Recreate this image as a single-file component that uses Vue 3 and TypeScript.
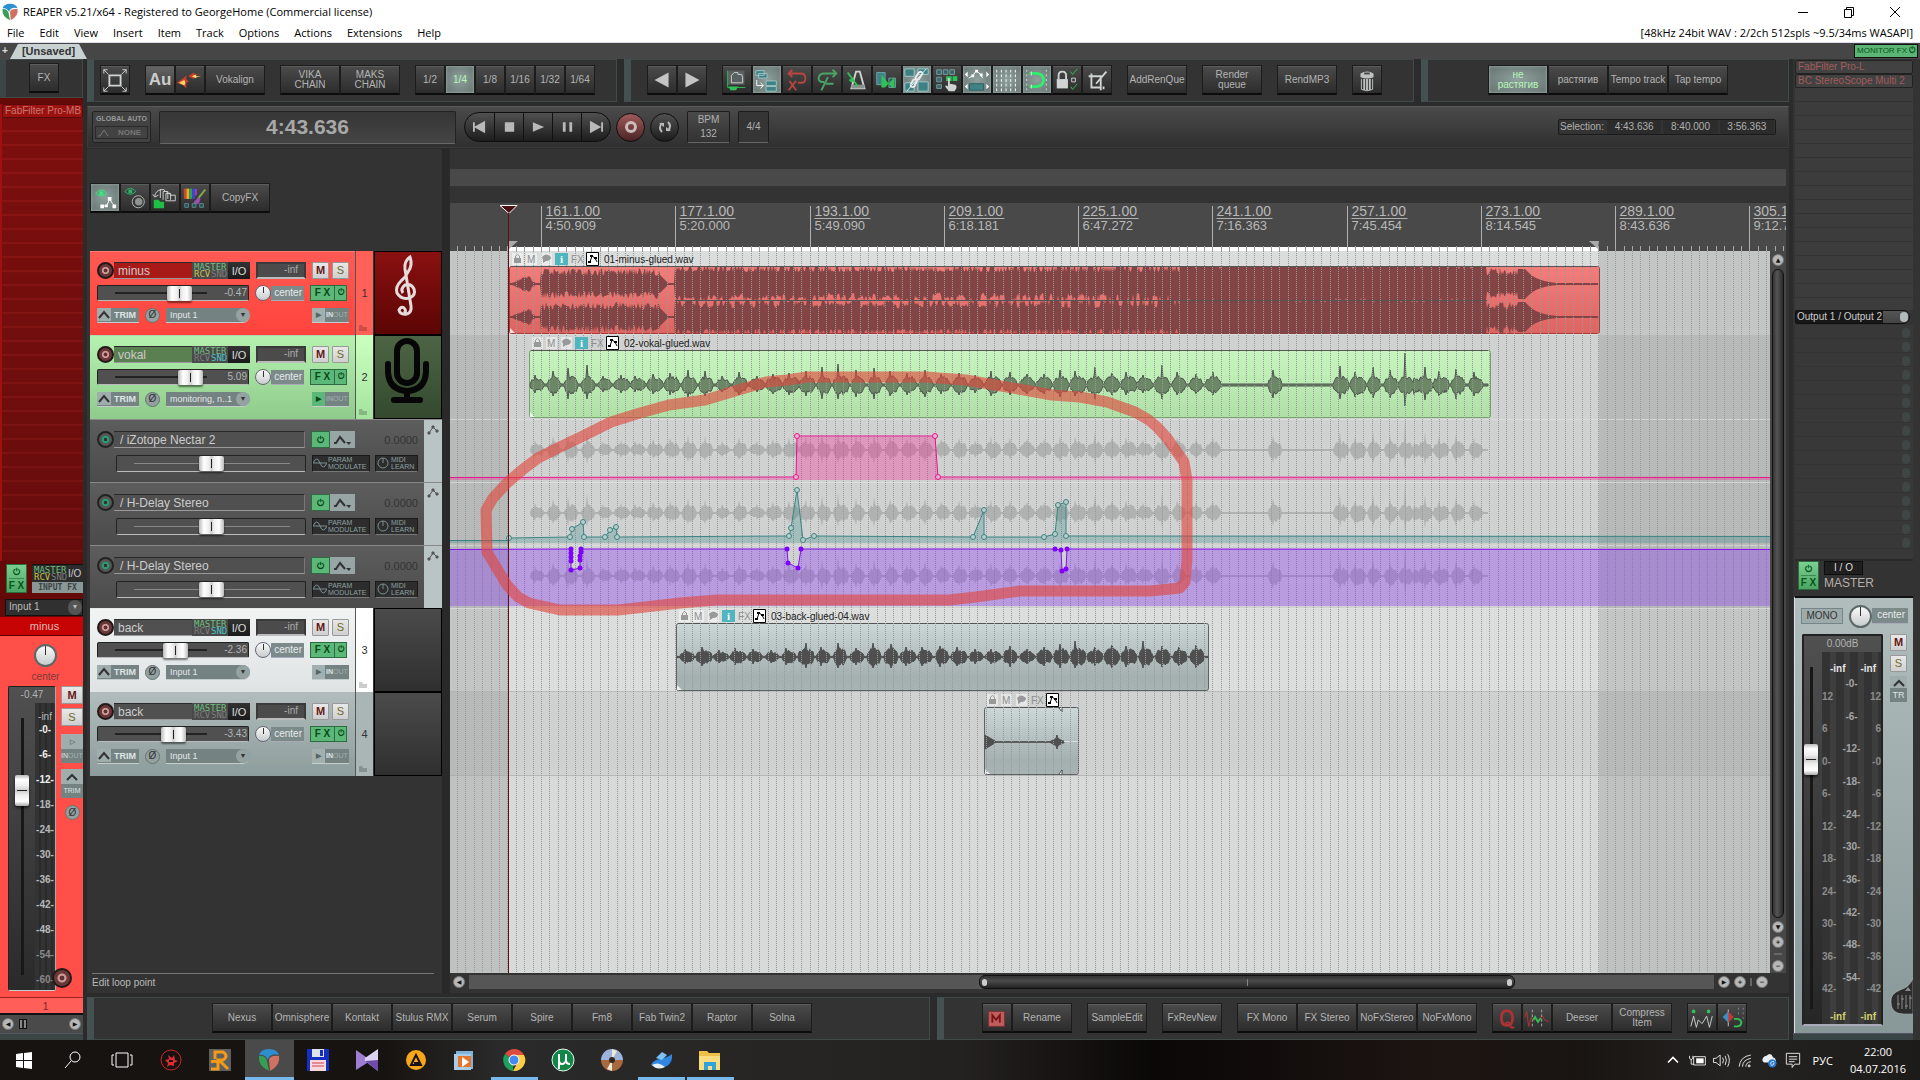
<script setup lang="ts">
interface Shape { d: string; f?: string; s?: string; w?: number }
interface ToolButton { label?: string; icon?: string; on?: boolean; wide?: boolean; title?: string }
interface Track {
  name: string; num: number; theme: string; gain: string; pos: number; input: string
  rcv?: boolean; snd?: boolean; monitor?: boolean; art?: string
}

const G = '#2fc257'
const W = '#d0d4d3'
const T = '#3f8286'

const icons: Record<string, Shape[]> = {
  expand: [
    { d: 'M9 10h12v11H9z', s: W, w: 2 },
    { d: 'M8 9L3 4M22 9l5-5M8 22l-5 5M22 22l5 5M3 8V4h4M27 8V4h-4M3 23v4h4M27 23v4h-4', s: W, w: 1 },
  ],
  flame: [
    { d: 'M13 11l6-4 1 2h8l-8 1-1 4z', f: '#c9402c' }, { d: 'M17 11l4-2 1 2 5 0-5 1-1 1z', f: '#ffd66a' },
    { d: 'M1 18l8-6 2-2v4l3 3-3 1v6l-3-3z', f: '#c9402c' }, { d: 'M3 18l6-3 1 3-1 3z', f: '#ffd66a' },
  ],
  prev: [{ d: 'M22 7v16L7 15z', f: '#c4c4c4' }],
  next: [{ d: 'M8 7v16l15-8z', f: '#c4c4c4' }],
  project: [
    { d: 'M5 5h18v15H5z', f: '#5a5f5f' }, { d: 'M5 5v18h19', s: G, w: 1 },
    { d: 'M9 18V10l3-3h4v2h4l1 3v6z', s: W, w: 1 }, { d: 'M6 22h10l-2 4H8z', f: G },
  ],
  ripple: [
    { d: 'M3 5h9v5H3zM6 8h9v5H6zM14 16h11v5H14zM14 22h11v5H14z', f: T, s: '#9fc5c5', w: 1 },
    { d: 'M4 15v6h7M8 18l3 3-3 3', s: '#fff', w: 1 },
  ],
  noUndo: [
    { d: 'M7 8h12q5 0 5 5t-5 5h-3M10 4L6 8l4 4', s: '#b8463f', w: 2 },
    { d: 'M7 16l7 10M14 16L6 26', s: '#b8463f', w: 2 },
  ],
  itemEdit: [{ d: 'M24 8H11q-5 1-5 6 1 4 6 3M21 4l4 4-4 4M16 12l-7 14M14 19h8', s: '#4aa564', w: 2 }],
  metronome: [
    { d: 'M14 6h4l5 18H9z', s: W, w: 2 }, { d: 'M9 20h14v4H9z', f: '#8b9090' }, { d: 'M5 7l11 15', s: G, w: 2 },
    { d: 'M6 15l6-3-3 6z', f: G },
  ],
  crossfade: [
    { d: 'M4 7h9v13H4z', f: T, s: '#6fa6a6', w: 1 }, { d: 'M17 13h7v10h-7z', f: '#345c5c', s: '#6fa6a6', w: 1 },
    { d: 'M9 9l11 14H9zM13 23h10V12z', f: G },
  ],
  group: [
    { d: 'M2 3h10v8H2zM16 3h11v6H16zM2 18h10v9H2zM16 17h11v10H16z', f: '#3d8086', s: '#a6caca', w: 1 },
    { d: 'M4 27L25 3', s: '#f2f5f5', w: 1 },
    { d: 'M8 20l3-5q3-2 4 1l-3 6q-3 2-4-2M13 13l4-6q3-2 4 1l-4 6q-2 2-4-1', s: '#e8eded', w: 2 },
  ],
  hand: [
    { d: 'M4 4h5v5H4zM11 4h5v5h-5zM18 4h5v5h-5zM4 12h5v5H4zM4 20h5v4H4z', f: '#3f6468', s: '#76a0a2', w: 1 },
    { d: 'M14 11h6v5h-6zM21 11h5v5h-5z', f: G },
    { d: 'M16 13q2-1 2 1v5l6 1q2 1 1 4l-2 3h-6l-4-5q1-2 3 0z', f: W },
  ],
  envMove: [
    { d: 'M6 13l5-3 3-5 5 4 2 4', s: '#fff', w: 1 }, { d: 'M9 9h3v3H9zM13 4h3v3h-3zM18 8h3v3h-3z', f: '#fff' },
    { d: 'M2 9l3-3v6zM28 9l-3-3v6zM2 22l3-3v6zM28 22l-3-3v6z', f: '#fff' }, { d: 'M7 19h15v7H7z', f: T, s: '#2b6165', w: 1 },
  ],
  grid: [
    { d: 'M4 4v3m0 2v3m0 2v3m0 2v3m0 2v3M9 4v3m0 2v3m0 2v3m0 2v3m0 2v3M14 4v3m0 2v3m0 2v3m0 2v3m0 2v3M19 4v3m0 2v3m0 2v3m0 2v3m0 2v3M24 4v3m0 2v3m0 2v3m0 2v3m0 2v3', s: '#fff', w: 1 },
  ],
  magnet: [
    { d: 'M4 4v2m0 3v2m0 3v2m0 3v2m0 3v2M25 4v2m0 3v2m0 3v2m0 3v2m0 3v2', s: '#d7e5e2', w: 1 },
    { d: 'M7 8h8q7 1 7 7t-7 7H7', s: '#2ff06b', w: 3 }, { d: 'M9 6v4M9 20v4', s: '#e9fff0', w: 1 },
  ],
  lock: [
    { d: 'M4 14h12v10H4z', f: W }, { d: 'M6 14v-4q0-4 4-4t4 4v4', s: W, w: 2 },
    { d: 'M19 6l2 3 5-6M19 22l2 3 5-6', s: G, w: 1 }, { d: 'M20 13h4v4h-4z', s: W, w: 1 },
  ],
  crop: [{ d: 'M9 8v15h9M6 11h13v15M14 19l11-13M22 22v3', s: W, w: 2 }],
  trash: [
    { d: 'M8 8q7-4 14 0v4q-7 3-14 0z', f: '#bfc2c2' }, { d: 'M9 14v11q6 3 12 0V14', s: '#bfc2c2', w: 1 },
    { d: 'M12 14v12M15 14v12M18 14v12', s: '#bfc2c2', w: 2 }, { d: 'M12 8h6', s: '#444', w: 2 },
  ],
  eyeEnv: [
    { d: 'M5 10q6-7 12 0-6 6-12 0z', s: '#2df07b', w: 1 }, { d: 'M9 8h4v4H9z', f: '#2df07b' },
    { d: 'M12 24l5-1 3-7 3 5 3 3', s: '#fff', w: 1 }, { d: 'M10 22h4v4h-4zM15 22h3v3h-3zM18 14h4v4h-4zM23 22h4v4h-4z', f: '#fff' },
  ],
  eyeKnob: [
    { d: 'M4 8q6-7 12 0-6 6-12 0z', s: '#2bb569', w: 1 }, { d: 'M8 6h4v4H8z', f: '#2bb569' },
    { d: 'M12 19a6 6 0 1 0 13 0a6 6 0 1 0-13 0', s: '#b9bcbc', w: 1 }, { d: 'M15 19a4 4 0 1 0 8 0a4 4 0 1 0-8 0', f: '#8f9393' },
  ],
  folders: [
    { d: 'M3 26V17h5l2 2h4v7z', f: '#1fbf45' }, { d: 'M4 13q1-6 7-7M2 11l2 3 4-2', s: W, w: 1 },
    { d: 'M10 15V6h4l1 2h3v8M13 17V8h4l1 2h3v7M16 18V10h4l1 2h5v6z', s: W, w: 1 },
  ],
  brush: [
    { d: 'M3 5h4v11H3z', f: '#cc4b2b' }, { d: 'M6 5h3v11H6z', f: '#d8b52d' }, { d: 'M9 5h3v11H9z', f: '#2ba15a' },
    { d: 'M12 5h3v11h-3z', f: '#4146c7' }, { d: 'M15 5h2v7h-2z', f: '#9b3fc7' },
    { d: 'M26 6l-8 10', s: '#7fae46', w: 2 }, { d: 'M19 14l-5 5-1 4 6-2 2-5z', f: '#9a4fb0' },
    { d: 'M4 21h4v4H4zM12 21h4v4h-4zM20 21h4v4h-4z', f: '#2b5055', s: '#5b8b90', w: 1 },
  ],
  mute: [{ d: 'M6 8h17v16H6z', f: '#c05d5d', s: '#7c3030', w: 1 }, { d: 'M10 20V12l4 5 4-5v8', s: '#7a1515', w: 2 }],
  q: [
    { d: 'M15 7q-6 0-6 8t6 8 6-8-6-8z', s: '#a33', w: 3 }, { d: 'M13 21q5-3 5 1t5 3', s: '#a33', w: 2 },
  ],
  trans: [
    { d: 'M10 6v3m0 2v3m0 2v3m0 2v3M20 6v3m0 2v3m0 2v3m0 2v3', s: '#aaa', w: 1 }, { d: 'M2 14l2-6 2 16 3-10 2 4', s: '#b33', w: 1 },
    { d: 'M11 17l2-3 3 5 3-4', s: G, w: 2 }, { d: 'M19 15l2-2 2 4 5 2', s: '#b33', w: 1 },
  ],
  peaks: [
    { d: 'M4 8a2 2 0 1 0 4 0a2 2 0 1 0-4 0M20 8a2 2 0 1 0 4 0a2 2 0 1 0-4 0', f: G },
    { d: 'M3 24l3-11 3 12 2-8 2 2 2 2 2-3 3-5 3 12 3-12', s: W, w: 1 },
  ],
  snapItem: [
    { d: 'M11 6v18', s: '#ccc', w: 1 }, { d: 'M11 8l-6 6 6 6z', f: '#3a8fc4' }, { d: 'M11 8l6 6-6 6z', f: '#c03a3a' },
    { d: 'M17 16h4q4 1 4 4t-4 4h-4', s: G, w: 2 }, { d: 'M22 4v2m0 3v2M27 4v2m0 3v2m0 3v2', s: '#888', w: 1 },
  ],
}

const bar1: ToolButton[][] = [
  [{ icon: 'expand', title: 'Zoom to project' }],
  [{ label: 'Au', title: 'Audition' }, { icon: 'flame', title: 'Spectral edit' }, { label: 'Vokalign', wide: true }],
  [{ label: 'VIKA\nCHAIN', wide: true }, { label: 'MAKS\nCHAIN', wide: true }],
  [{ label: '1/2' }, { label: '1/4', on: true }, { label: '1/8' }, { label: '1/16' }, { label: '1/32' }, { label: '1/64' }],
]
const bar2: ToolButton[][] = [
  [{ icon: 'prev', title: 'Previous' }, { icon: 'next', title: 'Next' }],
  [
    { icon: 'project', title: 'Project' }, { icon: 'ripple', on: true, title: 'Ripple' }, { icon: 'noUndo', title: 'Clear' },
    { icon: 'itemEdit', title: 'Edit' }, { icon: 'metronome', title: 'Metronome' }, { icon: 'crossfade', title: 'Crossfade' },
    { icon: 'group', on: true, title: 'Grouping' }, { icon: 'hand', title: 'Select group' }, { icon: 'envMove', on: true, title: 'Move envelopes' },
    { icon: 'grid', on: true, title: 'Grid' }, { icon: 'magnet', on: true, title: 'Snap' }, { icon: 'lock', title: 'Lock' }, { icon: 'crop', title: 'Crop' },
  ],
  [{ label: 'AddRenQue', wide: true }],
  [{ label: 'Render\nqueue', wide: true }],
  [{ label: 'RendMP3', wide: true }],
  [{ icon: 'trash', title: 'Clean' }],
]
const bar3: ToolButton[][] = [
  [{ label: 'не\nрастягив', on: true, wide: true }, { label: 'растягив', wide: true }, { label: 'Tempo track', wide: true }, { label: 'Tap tempo', wide: true }],
]
const tcpBar: ToolButton[][] = [
  [
    { icon: 'eyeEnv', on: true, title: 'Show envelopes' }, { icon: 'eyeKnob', title: 'Show controls' }, { icon: 'folders', title: 'Folders' },
    { icon: 'brush', title: 'Colours' }, { label: 'CopyFX', wide: true },
  ],
]
const bar4: ToolButton[][] = [
  ['Nexus', 'Omnisphere', 'Kontakt', 'Stulus RMX', 'Serum', 'Spire', 'Fm8', 'Fab Twin2', 'Raptor', 'Solna'].map((label) => ({ label, wide: true })),
]
const bar5: ToolButton[][] = [
  [{ icon: 'mute', title: 'Mute' }, { label: 'Rename', wide: true }],
  [{ label: 'SampleEdit', wide: true }],
  [{ label: 'FxRevNew', wide: true }],
  [{ label: 'FX Mono', wide: true }, { label: 'FX Stereo', wide: true }, { label: 'NoFxStereo', wide: true }, { label: 'NoFxMono', wide: true }],
  [{ icon: 'q', title: 'Quantize' }, { icon: 'trans', title: 'Transients' }, { label: 'Deeser', wide: true }, { label: 'Compress\nItem', wide: true }],
  [{ icon: 'peaks', title: 'Peaks' }, { icon: 'snapItem', title: 'Snap item' }],
]
const topBars = [
  { cls: 'b1', groups: bar1 }, { cls: 'b2', groups: bar2 }, { cls: 'b3', groups: bar3 },
]
const bottomBars = [{ cls: 'b4', groups: bar4 }, { cls: 'b5', groups: bar5 }]

const menus = ['File', 'Edit', 'View', 'Insert', 'Item', 'Track', 'Options', 'Actions', 'Extensions', 'Help']

const reaperLogo: Shape[] = [
  { d: 'M2 7Q4 1 12 1q8 0 10 6-5-2-9 1-2 2-2 4Q8 6 2 7z', f: '#2b8fd0' },
  { d: 'M2 8q6-1 8 5l2 10Q1 18 2 8z', f: '#35a055' },
  { d: 'M13 23l-1-11q1-5 10-4 2 9-9 15z', f: '#cf7263' },
]

const transport: Shape[][] = [
  [{ d: 'M9 10v10M20 10v10l-9-5z', f: '#b9b9b9', s: '#b9b9b9', w: 2 }],
  [{ d: 'M10 10h10v10H10z', f: '#b9b9b9' }],
  [{ d: 'M9 10l12 5-12 5z', f: '#b9b9b9' }],
  [{ d: 'M10 10h3v10h-3zM17 10h3v10h-3z', f: '#b9b9b9' }],
  [{ d: 'M21 10v10M9 10v10l9-5z', f: '#b9b9b9', s: '#b9b9b9', w: 2 }],
]
const transportNames = ['Go to start', 'Stop', 'Play', 'Pause', 'Go to end']

const tracksTop: Track[] = [
  { name: 'minus', num: 1, theme: 'red', gain: '-0.47', pos: 55, input: 'Input 1', rcv: true, art: 'clef' },
  { name: 'vokal', num: 2, theme: 'green', gain: '5.09', pos: 64, input: 'monitoring, n..1', snd: true, monitor: true, art: 'mic' },
]
const envs = ['/ iZotope Nectar 2', '/ H-Delay Stereo', '/ H-Delay Stereo']
const tracksBottom: Track[] = [
  { name: 'back', num: 3, theme: 'white', gain: '-2.36', pos: 52, input: 'Input 1', snd: true },
  { name: 'back', num: 4, theme: 'grey', gain: '-3.43', pos: 50, input: 'Input 1' },
]
const rows: { track?: Track; env?: string }[] = [
  ...tracksTop.map((track) => ({ track })), ...envs.map((env) => ({ env })), ...tracksBottom.map((track) => ({ track })),
]

/* timeline geometry */
const BAR = 134.27
const ruler = [
  ['161.1.00', '4:50.909'], ['177.1.00', '5:20.000'], ['193.1.00', '5:49.090'], ['209.1.00', '6:18.181'], ['225.1.00', '6:47.272'],
  ['241.1.00', '7:16.363'], ['257.1.00', '7:45.454'], ['273.1.00', '8:14.545'], ['289.1.00', '8:43.636'], ['305.1.00', '9:12.727'],
].map(([bar, time], i) => ({ bar, time, x: Math.round(541 + i * BAR) + 0.5 }))
const gridLines = Array.from({ length: 170 }, (_, i) => Math.round(541 + (i - 10) * (BAR / 16)) + 0.5)

const noise = (n: number): number => {
  const v = Math.sin(n * 127.1 + 11.7) * 43758.5453
  return v - Math.floor(v)
}
function outline(x0: number, x1: number, cy: number, amp: (x: number) => [number, number]): string {
  const up: string[] = []
  const down: string[] = []
  for (let x = x0; x <= x1; x++) {
    const [u, d] = amp(x)
    up.push(`${x} ${(cy - u).toFixed(1)}`)
    down.unshift(`${x} ${(cy + d).toFixed(1)}`)
  }
  return `M${up.join('L')}L${down.join('L')}z`
}
type Burst = [number, number, number]
function burstAmp(bursts: Burst[], half: number, floor: number) {
  return (x: number): [number, number] => {
    for (const [c, u, d] of bursts) {
      const k = Math.abs(x - c) / (half - 2 * noise(c))
      if (k < 1) {
        const shape = Math.pow(1 - k * k, 0.35)
        const spike = Math.round(x - c + 3 * noise(c + 9)) === 0
        const base = Math.min(u, 12) * 0.62
        return [
          Math.max(floor, spike ? u : base * shape * (0.75 + 0.5 * noise(x))),
          Math.max(floor, spike ? d : Math.min(d, 12) * 0.78 * shape * (0.65 + 0.4 * noise(x + 500))),
        ]
      }
    }
    return [floor, floor]
  }
}
const vocalUps = [10, 14, 17, 20, 9, 10, 9, 11, 12, 15, 14, 9, 13, 9, 11, 12, 14, 18, 21, 15, 17, 14, 12, 15, 11, 12, 10, 14, 13, 11, 11, 15, 14, 18, 12, 13, 10, 20, 13, 11, 13]
const vocal: Burst[] = [
  ...vocalUps.map((u, i): Burst => [Math.round(537 + i * 16.9), u, Math.min(14, Math.round(u * 0.8))]),
  [1275, 15, 13], [1341, 19, 14], [1358, 13, 12], [1374, 18, 13], [1391, 15, 13], [1406, 32, 21], [1412, 26, 16], [1425, 18, 15], [1441, 14, 11], [1458, 16, 14], [1476, 13, 11],
]
const vocalPath = outline(530, 1488, 385, burstAmp(vocal, 8, 1))
const backUps = [7, 9, 6, 8, 7, 6, 8, 13, 9, 13, 8, 13, 12, 9, 9, 10, 9, 7, 7, 10, 7, 9, 12, 15, 9, 11, 10, 15, 10, 9, 11]
const backPath = outline(677, 1208, 657, burstAmp(backUps.map((u, i): Burst => [687 + i * 17, u + 1, Math.min(11, u)]), 8, 0.6))
const smallPath = outline(985, 1064, 742, (x) => {
  const a = x < 996 ? 7 - (x - 985) * 0.6 : x === 1057 ? 7 : x > 1050 ? Math.max(1, 4 - Math.abs(x - 1057) * 0.5) : 0.2
  return [a, a]
})
function mixAmp(seed: number, flip: boolean) {
  return (x: number): [number, number] => {
    const n = noise(x + seed)
    let a = 16
    let b = 16
    if (x < 535) a = b = 1 + Math.max(0, Math.min(x - 512, 14) / 2) * (x > 531 ? 0.2 : 0.6 + n * 0.5)
    else if (x < 541) a = b = 1
    else if (x < 660) { a = 8 + n * 8; b = 7 + noise(x + seed + 90) * 8 }
    else if (x < 668) a = b = 9 - (x - 660)
    else if (x < 675) a = b = 1
    else if (x < 1180) {
      const density = x < 960 ? 0.5 : x < 1080 ? 0.62 : 0.75
      a = n > density ? 16 - n * 4 : 17
      const m = 0.6 * noise(Math.floor(x / 3) + seed + 33) + 0.4 * noise(x + seed + 5)
      b = m > density * 0.8 ? 20 - m * 12 : 17
      if (b > 16) b = 17
    } else if (x < 1487) {
      a = n > 0.96 ? 15 : 17
      b = noise(x + seed + 7) > 0.96 ? 14 : 17
    } else if (x < 1518) { a = 8 + n * 9; b = 7 + noise(x + seed) * 8 }
    else if (x < 1526) { a = 15; b = 15 }
    else if (x < 1558) a = b = Math.max(1, 14 * Math.exp(-(x - 1526) / 12))
    else a = b = 1
    return flip ? [b, a] : [a, b]
  }
}
const mixPath = outline(510, 1598, 284, mixAmp(0, false)) + outline(510, 1598, 317, mixAmp(40, true))

const lanes = [
  { y: 251, h: 84, sel: '#dbdddc', out: '#c4c6c5' }, { y: 335, h: 84, sel: '#d0d2d1', out: '#b8bab9' },
  { y: 419, h: 63, sel: '#d0d2d1', out: '#b8bab9' }, { y: 482, h: 63, sel: '#d0d2d1', out: '#b8bab9' },
  { y: 545, h: 63, sel: '#d0d2d1', out: '#b8bab9' }, { y: 608, h: 84, sel: '#dcdedd', out: '#c4c6c5' },
  { y: 692, h: 84, sel: '#d0d2d1', out: '#b8bab9' },
]
const clips = [
  { x: 509, y: 267, w: 1090, h: 67, fill: 'url(#gRed)', line: '#a83a3a', label: '01-minus-glued.wav', info: true },
  { x: 529, y: 351, w: 961, h: 67, fill: 'url(#gGreen)', line: '#76a36c', label: '02-vokal-glued.wav', info: true },
  { x: 676, y: 624, w: 532, h: 67, fill: 'url(#gGrey)', line: '#5b6363', label: '03-back-glued-04.wav', info: true },
  { x: 984, y: 708, w: 94, h: 67, fill: 'url(#gGrey)', line: '#5b6363', label: '', info: false },
]
type P = [number, number]
const pinkPts: P[] = [[796, 477], [797, 436], [935, 436], [938, 477]]
const tealPts: P[] = [
  [509, 538], [570, 537], [572, 529], [583, 522], [584, 537], [605, 537], [610, 530], [616, 527], [617, 537], [789, 536], [791, 528], [797, 490],
  [803, 540], [814, 536], [973, 537], [984, 510], [984, 537], [1044, 537], [1055, 534], [1058, 505], [1066, 502], [1066, 536],
]
const purplePts: P[] = [
  [571, 549], [571, 553], [571, 557], [571, 561], [571, 570], [580, 568], [580, 560], [580, 556], [581, 552], [581, 549],
  [787, 549], [788, 563], [798, 568], [801, 549], [1055, 549], [1061, 550], [1062, 571], [1066, 569], [1067, 549],
]
const line = (pts: P[]): string => pts.map((p) => p.join(' ')).join('L')

const dbLeft = ['-0-', '-6-', '-12-', '-18-', '-24-', '-30-', '-36-', '-42-', '-48-', '-54-', '-60-']
const dbMid = dbLeft.slice(0, 10)
const dbSide = ['12', '6', '0', '6', '12', '18', '24', '30', '36', '42']

const apps: { name: string; active?: boolean; open?: boolean; shapes: Shape[] }[] = [
  { name: 'Start', shapes: [{ d: 'M4 6l7-1v7H4zM12 5l8-1v8h-8zM4 13h7v7l-7-1zM12 13h8v8l-8-1z', f: '#fff' }] },
  { name: 'Search', shapes: [{ d: 'M9 9a5 5 0 1 0 10 0a5 5 0 1 0-10 0M10 13l-6 7', s: '#fff', w: 1 }] },
  { name: 'Task view', shapes: [{ d: 'M6 5h12v14H6zM4 7H2v10h2M20 7h2v10h-2', s: '#fff', w: 1 }] },
  { name: 'Mixer', shapes: [{ d: 'M2 12a10 10 0 1 0 20 0a10 10 0 1 0-20 0', s: '#c9252c', w: 1 }, { d: 'M6 12l4-1-1-4 4 3 2-3 1 5 3 1-4 2 0 3-4-1-3 2 1-4z', f: '#e02b31' }, { d: 'M10 12h4v2h-4z', f: '#111' }] },
  { name: 'Rapid', shapes: [{ d: 'M1 1h22v22H1z', f: '#5d5f60' }, { d: 'M7 11V4h8q6 4 0 8h-4l9 9M3 14q5-2 7 1v6H3', s: '#f49a16', w: 3 }] },
  { name: 'Reaper', active: true, shapes: reaperLogo },
  { name: 'Total Commander', shapes: [{ d: 'M1 1h22v22H1z', f: '#1530c0' }, { d: 'M6 1h12v8H6z', f: '#dfe3ea' }, { d: 'M14 2h3v6h-3z', f: '#1530c0' }, { d: 'M4 12h16v11H4z', f: '#f5d9dc' }, { d: 'M6 15h12M6 18h12', s: '#d43c4a', w: 1 }] },
  { name: 'Video editor', shapes: [{ d: 'M1 2l10 7 1 6-11 7z', f: '#9d7ed2' }, { d: 'M23 1v22L10 13V10z', f: '#ddd2f2' }, { d: 'M23 12v11L10 13z', f: '#6f4cab' }] },
  { name: 'AIMP', shapes: [{ d: 'M2 12a10 10 0 1 0 20 0a10 10 0 1 0-20 0', f: '#f9a61a' }, { d: 'M7 17l5-10 5 10zM10 15h5', s: '#141414', w: 2 }] },
  { name: 'Player', shapes: [{ d: 'M3 3h17v18H3z', f: '#7fb4d8' }, { d: 'M1 6h17v16H1z', f: '#a9cde4' }, { d: 'M5 8h13v11H5z', f: '#e8742b' }, { d: 'M9 9l7 5-7 5z', f: '#fff' }] },
  { name: 'Chrome', open: true, shapes: [{ d: 'M12 12L3 6a11 11 0 0 1 19 1H12z', f: '#dd4b3e' }, { d: 'M12 12l-1 11A11 11 0 0 1 3 6z', f: '#1fa15d' }, { d: 'M12 7h10a11 11 0 0 1-11 16l5-9z', f: '#fdce45' }, { d: 'M7 12a5 5 0 1 0 10 0a5 5 0 1 0-10 0', f: '#4688f1', s: '#fff', w: 1 }] },
  { name: 'uTorrent', shapes: [{ d: 'M1 12a11 11 0 1 0 22 0a11 11 0 1 0-22 0', f: '#118747', s: '#e8f5ec', w: 1 }, { d: 'M8 21V6M8 12q0 4 3 4t4-4V6M15 12q0 4 4 4', s: '#fff', w: 2 }] },
  { name: 'Disc burner', shapes: [{ d: 'M1 12a11 11 0 0 1 22 0z', f: '#9db3dc' }, { d: 'M1 12a11 11 0 0 0 22 0z', f: '#a8693f' }, { d: 'M12 1l5 2-5 9zM12 23l-5-2 5-9z', f: '#eee8d6' }, { d: 'M9 12a3 3 0 1 0 6 0a3 3 0 1 0-6 0', f: '#33271f' }] },
  { name: 'Thunderbird', open: true, shapes: [{ d: 'M2 17q2-5 9-6t12-5q1 8-5 12t-16-1z', f: '#2f86e0' }, { d: 'M7 10l6-6 5 3-5 5z', f: '#7bc0f7' }, { d: 'M3 17q6-4 13 2-8 4-13-2z', f: '#e8eef5' }] },
  { name: 'Explorer', open: true, shapes: [{ d: 'M1 3h8l2 2h11v17H1z', f: '#f0bf46' }, { d: 'M1 8h21v14H1z', f: '#fbdd80' }, { d: 'M6 14h12v8h-4v-4h-4v4H6z', f: '#2ea4dc' }] },
]
const tray: { name: string; shapes: Shape[] }[] = [
  { name: 'Show hidden icons', shapes: [{ d: 'M6 15l6-6 6 6', s: '#fff', w: 2 }] },
  { name: 'Battery', shapes: [{ d: 'M8 8h14v10H8z', s: '#fff', w: 1 }, { d: 'M11 10h9v6h-9z', f: '#fff' }, { d: 'M3 7v3q2 3 4 0V7M5 11v6h3', s: '#fff', w: 1 }] },
  { name: 'Volume', shapes: [{ d: 'M3 10h3l5-4v13l-5-4H3zM14 9q2 3 0 7M17 7q3 5 0 11M20 5q4 7 0 15', s: '#fff', w: 1 }] },
  { name: 'Network', shapes: [{ d: 'M5 20Q6 8 19 6M9 20q0-8 10-10M13 20q0-5 6-6M16 18h2v2h-2z', s: '#fff', w: 1 }] },
  { name: 'OneDrive', shapes: [{ d: 'M4 13q0-5 5-6 5-5 8 2 4 1 3 6H6z', f: '#e8eef2' }, { d: 'M11 16a5 5 0 1 0 10 0a5 5 0 1 0-10 0', f: '#2479cf' }, { d: 'M14 17q0-4 4-3M18 15q0 4-4 3', s: '#fff', w: 1 }] },
  { name: 'Notifications', shapes: [{ d: 'M4 4h16v13h-6l-3 4v-4H4zM7 8h10M7 11h10M7 14h7', s: '#fff', w: 1 }] },
]
</script>

<template>
  <div class="app">
    <header class="title">
      <svg width="18" height="20" viewBox="0 0 24 24"><path v-for="(p, i) in reaperLogo" :key="i" :d="p.d" :fill="p.f" /></svg>
      <h1>REAPER v5.21/x64 - Registered to GeorgeHome (Commercial license)</h1>
      <div class="win">
        <button aria-label="Minimize"><svg width="12" height="12"><path d="M1 6.500h10" stroke="#000" /></svg></button>
        <button aria-label="Restore"><svg width="12" height="12" fill="none" stroke="#000"><path d="M1.500 3.500h7v8h-7zM3.500 3V1.500h7v8H9" /></svg></button>
        <button aria-label="Close"><svg width="12" height="12" stroke="#000"><path d="M1 1l10 10M11 1L1 11" /></svg></button>
      </div>
    </header>
    <nav class="menu">
      <a v-for="m in menus" :key="m" href="#">{{ m }}</a>
      <span>[48kHz 24bit WAV : 2/2ch 512spls ~9.5/34ms WASAPI]</span>
    </nav>
    <div class="tabs">
      <button class="plus">+</button>
      <button class="tab"><span>[Unsaved]</span></button>
      <button class="monfx">MONITOR FX<b>⏻</b></button>
    </div>

    <div class="body">
      <!-- track mixer strip -->
      <aside class="left">
        <div class="fxbar"><button class="tb">FX</button></div>
        <div class="fxlist red"><button class="fxitem">FabFilter Pro-MB</button></div>
        <div class="lrow">
          <button class="fxpow"><b>⏻</b><span>F X</span></button>
          <div class="lio">
            <button class="route"><span class="msr"><i class="g">MASTER</i><i class="y">RCV</i><i>SND</i></span><em>I/O</em></button>
            <button class="infx">INPUT FX</button>
          </div>
        </div>
        <button class="linput">Input 1<i>▼</i></button>
        <div class="lname">minus</div>
        <div class="strip">
          <button class="knob big" aria-label="Pan"></button>
          <div class="cen">center</div>
          <div class="strip-in">
            <div class="lbox">
              <div class="gain">-0.47</div>
              <div class="lmeter">
                <input class="vf" type="range" min="0" max="100" value="72" aria-label="Volume" />
                <ul>
                  <li class="inf">-inf</li>
                  <li v-for="(d, i) in dbLeft" :key="d" :class="{ hot: i < 3, dim: i > 8, first: i === 0 }">{{ d }}</li>
                </ul>
              </div>
              <button class="rec lrec" aria-label="Record arm"></button>
            </div>
            <div class="lbtns">
              <button class="ms m">M</button>
              <button class="ms s">S</button>
              <button class="stack"><span>▷</span><em>IN<i>OUT</i></em></button>
              <button class="stack"><span><svg width="14" height="9"><path d="M2 8l5-5 5 5" fill="none" stroke="#333" stroke-width="2" /></svg></span><em>TRIM</em></button>
              <button class="phase">Ø</button>
            </div>
          </div>
        </div>
        <div class="lnum">1</div>
        <div class="lscroll"><button class="rb">◀</button><i></i><button class="rb">▶</button></div>
        <div class="lfoot"></div>
      </aside>

      <main class="center">
        <div class="bars">
          <section v-for="bar in topBars" :key="bar.cls" class="bar" :class="bar.cls">
            <div v-for="(g, gi) in bar.groups" :key="gi" class="grp">
              <button v-for="(b, bi) in g" :key="bi" class="tb" :class="{ wide: b.wide, on: b.on, au: b.label === 'Au' }" :title="b.title">
                <svg v-if="b.icon" width="28" height="28" viewBox="0 0 30 30"><path v-for="(p, pi) in icons[b.icon]" :key="pi" :d="p.d" :fill="p.f || 'none'" :stroke="p.s" :stroke-width="p.w" /></svg>
                <span v-else>{{ b.label }}</span>
              </button>
            </div>
          </section>
        </div>

        <section class="transport">
          <div class="gauto">
            <span>GLOBAL AUTO</span>
            <button><svg width="14" height="11"><path d="M2 9h2l4-6 4 6" fill="none" stroke="#777" /></svg>NONE</button>
          </div>
          <div class="clock">4:43.636</div>
          <div class="pill">
            <button v-for="(t, i) in transport" :key="i" :aria-label="transportNames[i]">
              <svg width="29" height="28" viewBox="0 0 30 30"><path v-for="(p, pi) in t" :key="pi" :d="p.d" :fill="p.f || 'none'" :stroke="p.s" :stroke-width="p.w" /></svg>
            </button>
          </div>
          <button class="round record" aria-label="Record"><i></i></button>
          <button class="round" aria-label="Repeat">
            <svg width="20" height="20" fill="none" stroke="#bbb" stroke-width="2"><path d="M7 15q-4-4 0-9M13 5q4 4 0 9" /><path d="M4 6h5v4zM16 14h-5v-4z" fill="#bbb" stroke="none" /></svg>
          </button>
          <button class="bpm"><span>BPM</span><span>132</span></button>
          <button class="sig">4/4</button>
          <div class="sel"><span>Selection:</span><b>4:43.636</b><b>8:40.000</b><b>3:56.363</b></div>
        </section>

        <div class="mainrow">
          <section class="tcp">
            <div class="tcpbar">
              <button v-for="(b, bi) in tcpBar[0]" :key="bi" class="tb" :class="{ wide: b.wide, on: b.on }" :title="b.title">
                <svg v-if="b.icon" width="28" height="28" viewBox="0 0 30 30"><path v-for="(p, pi) in icons[b.icon]" :key="pi" :d="p.d" :fill="p.f || 'none'" :stroke="p.s" :stroke-width="p.w" /></svg>
                <span v-else>{{ b.label }}</span>
              </button>
            </div>
            <template v-for="(r, ri) in rows" :key="ri">
              <div v-if="r.track" class="track" :class="r.track.theme">
                <div class="tbody">
                  <div class="trow">
                    <button class="rec" aria-label="Record arm"></button>
                    <input class="name" type="text" :value="r.track.name" aria-label="Track name" />
                    <button class="msr"><i class="g">MASTER</i><i :class="{ y: r.track.rcv }">RCV</i><i :class="{ c: r.track.snd }">SND</i></button>
                    <button class="io">I/O</button>
                    <div class="meter"><span>-inf</span></div>
                    <button class="ms m">M</button>
                    <button class="ms s">S</button>
                  </div>
                  <div class="trow">
                    <div class="fader"><input type="range" min="0" max="100" :value="r.track.pos" aria-label="Volume" /><span>{{ r.track.gain }}</span></div>
                    <button class="knob" aria-label="Pan"></button>
                    <div class="panbox">center</div>
                    <button class="fx">F X</button><button class="fx pw">⏻</button>
                  </div>
                  <div class="trow">
                    <button class="trim"><svg width="14" height="13"><path d="M2 10l5-6 5 6" fill="none" stroke="#333" stroke-width="2" /></svg><span>TRIM</span></button>
                    <button class="phase">Ø</button>
                    <div class="inp"><select aria-label="Input"><option>{{ r.track.input }}</option></select><i>▼</i></div>
                    <button class="mon" :class="{ live: r.track.monitor }"><b>▶</b><span>IN<i>OUT</i></span></button>
                  </div>
                </div>
                <div class="num">{{ r.track.num }}<svg width="10" height="8"><path d="M1 7V1h3l1 2h4v4z" fill="#000" opacity=".2" /></svg></div>
                <div class="art">
                  <svg v-if="r.track.art === 'clef'" width="66" height="82" fill="none" stroke="#e6dcdc">
                    <path d="M32 62q-7 1-8-4 2-4 5-2 3 3 0 5M32 62q5-2 4-8L30 17q-1-8 5-12 3 8-2 15-2 5-7 9-6 6-4 12 4 7 13 5 6-3 4-9-3-6-9-4-5 4-2 8" stroke-width="3" />
                  </svg>
                  <svg v-if="r.track.art === 'mic'" width="66" height="82" fill="none" stroke="#060606" stroke-width="6" stroke-linecap="round">
                    <rect x="22" y="5" width="20" height="42" rx="10" /><path d="M13 28v8q1 18 19 19 18-1 19-19v-8M32 56v7M19 64h26" />
                  </svg>
                </div>
              </div>
              <div v-else class="env">
                <div class="tbody">
                  <div class="trow">
                    <button class="rec teal" aria-label="Arm envelope"></button>
                    <input class="name" type="text" :value="r.env" aria-label="Envelope name" />
                    <button class="fx pw epw">⏻</button>
                    <button class="shape" aria-label="Envelope shape"><svg width="24" height="16"><path d="M4 11h2l4-6 5 6" fill="none" stroke="#333" stroke-width="2" /><path d="M16 10h5l-2 3z" fill="#333" /></svg></button>
                    <output>0.0000</output>
                  </div>
                  <div class="trow two">
                    <div class="fader"><input type="range" min="0" max="100" value="50" aria-label="Envelope value" /></div>
                    <button class="mini pm"><svg width="14" height="14"><path d="M0 7q4-8 7 0t7 0H0" fill="none" stroke="#7d9090" /></svg><span>PARAM MODULATE</span></button>
                    <button class="mini ml"><svg width="14" height="14" fill="none" stroke="#7d9090"><circle cx="7" cy="7" r="5" /><path d="M7 2v5" /></svg><span>MIDI LEARN</span></button>
                  </div>
                </div>
                <div class="estrip"><svg width="12" height="12" fill="#555" stroke="#555"><path d="M2 9l4-6 4 4" fill="none" /><path d="M1 8h2v2H1zM5 2h2v2H5zM9 6h2v2H9z" /></svg></div>
              </div>
            </template>
            <div class="status">Edit loop point</div>
          </section>

          <section class="arr">
            <div class="regions"></div>
            <svg class="ruler" height="48">
              <g transform="translate(-450 -203)">
                <rect x="508" y="247" width="1091" height="4" fill="#fff" />
                <path v-for="x in gridLines" :key="x" :d="`M${x} 246v5`" :stroke="x > 508 && x < 1598 ? '#999' : '#aaa'" />
                <path d="M508 241h10l-9 8zM1599 241h-10l9 8z" fill="#aaa" />
                <g v-for="r in ruler" :key="r.bar">
                  <path :d="`M${r.x} 206v41M${r.x + 4} 218.500h56`" stroke="#b0b0b0" />
                  <text :x="r.x + 4" y="216" class="r1">{{ r.bar }}</text>
                  <text :x="r.x + 4" y="230" class="r2">{{ r.time }}</text>
                </g>
                <path d="M500 205.500h17l-8 8z" fill="#4a1010" stroke="#fff" />
                <path d="M508.500 213v38" stroke="#5a1010" />
              </g>
            </svg>
            <div class="canvasrow">
              <svg class="canvas">
                <defs>
                  <linearGradient id="gRed" x2="0" y2="1"><stop stop-color="#f27d7a" /><stop offset="1" stop-color="#dc6562" /></linearGradient>
                  <linearGradient id="gGreen" x2="0" y2="1"><stop stop-color="#c8f5bf" /><stop offset="1" stop-color="#afe0a6" /></linearGradient>
                  <linearGradient id="gGrey" x2="0" y2="1"><stop stop-color="#cbd8d7" /><stop offset=".8" stop-color="#a3b0af" /><stop offset="1" stop-color="#a8b4b3" /></linearGradient>
                </defs>
                <g transform="translate(-450 -251)">
                  <rect x="450" y="251" width="100%" height="100%" fill="#c0c2c1" />
                  <rect x="509" y="251" width="1090" height="100%" fill="#d8dad9" />
                  <g v-for="l in lanes" :key="l.y">
                    <rect x="450" :y="l.y" width="100%" :height="l.h" :fill="l.out" />
                    <rect x="509" :y="l.y" width="1090" :height="l.h" :fill="l.sel" />
                  </g>
                  <path d="M450 419.500h1340M450 482.500h1340M450 545.500h1340M450 608.500h1340" stroke="#e4e6e5" opacity=".6" />
                  <path d="M450 691.500h1340M450 775.500h1340" stroke="#a8aaa9" opacity=".6" />
                  <g v-for="c in clips" :key="c.x">
                    <rect :x="c.x + 0.5" :y="c.y - 0.5" :width="c.w" :height="c.h" rx="2" :fill="c.fill" :stroke="c.line" />
                    <path :d="`M${c.x + 2} ${c.y - 0.5}h${c.w - 4}`" stroke="#555" />
                    <path :d="`M${c.x + 1} ${c.y + 61}l5 5h-5z`" fill="#fff" opacity=".8" />
                  </g>
                  <path :d="mixPath" fill="#824444" />
                  <path d="M675 300.500h812" stroke="#555" />
                  <path :d="vocalPath" fill="#6c8766" stroke="#4f574f" />
                  <path :d="backPath" fill="#4f4f4f" stroke="#4f4f4f" />
                  <path :d="smallPath" fill="#4f4f4f" stroke="#4f4f4f" />
                  <path d="M1064 741.500h14" stroke="#d5dddd" />
                  <path d="M1059 708l3 4v-4M1059 774l3-4v4" fill="#fff" stroke="#444" />
                  <g fill="#b0b2b1">
                    <path v-for="dy in [65, 128, 191]" :key="dy" :d="vocalPath" :transform="`translate(0 ${dy})`" />
                  </g>
                  <g stroke="#979998" stroke-dasharray="1 1">
                    <line v-for="x in gridLines" :key="x" :x1="x" :x2="x" y1="251" y2="1400" />
                  </g>
                  <g v-for="c in clips" :key="c.y" :transform="`translate(${c.x} ${c.y - 16})`">
                    <path d="M3 2h11v12H3zM17 2h11v12H17zM32 2h11v12H32z" fill="#fff" opacity=".45" />
                    <path d="M5 7h7v5H5z" fill="#999" /><path d="M6.500 7V5q2-3 4 0v2" fill="none" stroke="#999" />
                    <text x="18" y="12" class="tag">M</text>
                    <path d="M33 6q4-5 9 0 0 4-5 4l-3 2v-3z" fill="#999" />
                    <template v-if="c.info">
                      <path d="M46 2h13v12H46z" fill="#4fb6c0" />
                      <text x="51" y="12" class="inf">i</text>
                      <text x="62" y="12" class="tag">FX</text>
                      <path d="M77.500 1.500h12v13h-12z" fill="#fff" stroke="#000" />
                      <path d="M79 11h2l2-6 3 2 2 4" fill="none" stroke="#000" /><path d="M81 4h3v2h-3zM85 6h3v2h-3zM79 10h3v2h-3z" />
                      <text x="95" y="12" class="fn">{{ c.label }}</text>
                    </template>
                    <template v-else>
                      <text x="47" y="12" class="tag">FX</text>
                      <path d="M62.500 1.500h12v13h-12z" fill="#fff" stroke="#000" />
                      <path d="M64 11h2l2-6 3 2 2 4" fill="none" stroke="#000" /><path d="M66 4h3v2h-3zM70 6h3v2h-3zM64 10h3v2h-3z" />
                    </template>
                  </g>

                  <path d="M450 477.500H796L797 436.500H935L938 477.500H1800V480H450z" fill="#ff1493" opacity=".3" />
                  <path :d="`M450 477.5L${line(pinkPts)}L1800 477.5`" fill="none" stroke="#e8138a" />
                  <circle v-for="(p, i) in pinkPts" :key="i" :cx="p[0]" :cy="p[1]" r="2.500" fill="#e6b6d0" stroke="#ee1188" />

                  <path :d="`M450 540L509 540L${line(tealPts)}L1800 536V543H450z`" fill="#2f8585" opacity=".28" />
                  <path :d="`M450 540.5L509 540.5L${line(tealPts)}L1800 536.5`" fill="none" stroke="#3d8484" />
                  <circle v-for="(p, i) in tealPts" :key="i" :cx="p[0]" :cy="p[1]" r="2.500" fill="#b9cdcb" stroke="#3d8484" />

                  <path :d="`M450 549L${line(purplePts)}L1800 549V606H450z`" fill="#8020ff" opacity=".3" />
                  <path :d="`M450 549.5L${line(purplePts)}L1800 549.5`" fill="none" stroke="#8410f0" />
                  <circle v-for="(p, i) in purplePts" :key="i" :cx="p[0]" :cy="p[1]" r="2.500" fill="#8000ff" />

                  <path d="M508.500 251V1400" stroke="#5a1212" />
                  <path
                    d="M486 510L493 498 507 483 522 470 538 458 560 447 581 437 611 422 640 413 669 405 705 400 735 391 766 382 787 380 807 377H926L966 380 995 385 1024 390 1052 395 1080 397 1107 402 1135 412 1149 420 1158 428 1167 438 1174 448 1184 462 1187 480V560L1185 582 1180 588 1150 591H1020L976 597 949 600H717L680 603 645 607 618 610H560L529 603 518 597 507 585 496 567 487 552z"
                    fill="none" stroke="#e0463c" stroke-opacity=".62" stroke-width="11" stroke-linejoin="round"
                  />
                </g>
              </svg>
              <div class="vs"><button class="rb">▲</button><div class="vthumb"></div><button class="rb">▼</button><button class="rb">+</button><hr /><button class="rb">−</button></div>
            </div>
            <div class="hs"><button class="rb">◀</button><div class="htrack"><div class="hthumb"><i></i><i></i><i></i></div></div><button class="rb">▶</button><button class="rb">+</button><hr /><button class="rb">−</button></div>
          </section>
        </div>

        <div class="bars bottom">
          <section v-for="bar in bottomBars" :key="bar.cls" class="bar" :class="bar.cls">
            <div v-for="(g, gi) in bar.groups" :key="gi" class="grp">
              <button v-for="(b, bi) in g" :key="bi" class="tb" :class="{ wide: b.wide }" :title="b.title">
                <svg v-if="b.icon" width="28" height="28" viewBox="0 0 30 30"><path v-for="(p, pi) in icons[b.icon]" :key="pi" :d="p.d" :fill="p.f || 'none'" :stroke="p.s" :stroke-width="p.w" /></svg>
                <span v-else>{{ b.label }}</span>
              </button>
            </div>
          </section>
        </div>
      </main>

      <!-- master strip -->
      <aside class="right">
        <div class="fxlist grey"><button class="fxitem">FabFilter Pro-L</button><button class="fxitem">BC StereoScope Multi 2</button></div>
        <div class="outs"><button><span>Output 1 / Output 2</span><i></i></button></div>
        <div class="sends"><i v-for="n in 16" :key="n"></i></div>
        <div class="rrow">
          <button class="fxpow"><b>⏻</b><span>F X</span></button>
          <div><button class="mio">I / O</button><h2>MASTER</h2></div>
        </div>
        <div class="master">
          <div class="mtop"><button class="mono">MONO</button><button class="knob big" aria-label="Pan"></button><div class="panbox">center</div></div>
          <div class="mrow">
            <div class="mbox">
              <div class="gain">0.00dB</div>
              <div class="mmeter">
                <input class="vf" type="range" min="0" max="100" value="73" aria-label="Master volume" />
                <div class="mscale">
                  <div class="infs"><span>-inf</span><span>-inf</span></div>
                  <div class="cols">
                    <div class="side"><span v-for="(d, i) in dbSide" :key="i">{{ d }}{{ i > 1 ? '-' : '' }}</span></div>
                    <div class="mid"><span v-for="d in dbMid" :key="d">{{ d }}</span></div>
                    <div class="side r"><span v-for="(d, i) in dbSide" :key="i">{{ i > 1 ? '-' : '' }}{{ d }}</span></div>
                  </div>
                  <div class="infs yel"><span>-inf</span><span>-inf</span></div>
                </div>
              </div>
            </div>
            <div class="mbtns">
              <button class="ms m">M</button>
              <button class="ms s">S</button>
              <button class="stack"><span><svg width="14" height="9"><path d="M2 8l5-5 5 5" fill="none" stroke="#333" stroke-width="2" /></svg></span><em>TR</em></button>
              <svg class="mixer" width="23" height="36"><path d="M23 0Q20 9 10 12 0 16 1 24 1 36 14 36H23z" fill="#2c2c2c" stroke="#dfe5e5" stroke-opacity=".4" /><path d="M8 17v14M12 17v14M16 17v14M20 17v14M7 26h3M11 21h3M15 28h3M19 20h3" stroke="#8a8a8a" /><path d="M15 13l3-4 3 4z" fill="#8a8a8a" /></svg>
            </div>
          </div>
        </div>
        <div class="lfoot"></div>
      </aside>
    </div>

    <footer class="task">
      <button v-for="a in apps" :key="a.name" class="app-btn" :class="{ active: a.active, open: a.open }" :aria-label="a.name">
        <svg width="24" height="24" viewBox="0 0 24 24"><path v-for="(p, i) in a.shapes" :key="i" :d="p.d" :fill="p.f || 'none'" :stroke="p.s" :stroke-width="p.w" /></svg>
      </button>
      <div class="tray">
        <button v-for="t in tray" :key="t.name" :aria-label="t.name"><svg width="20" height="20" viewBox="0 0 24 24"><path v-for="(p, i) in t.shapes" :key="i" :d="p.d" :fill="p.f || 'none'" :stroke="p.s" :stroke-width="p.w" /></svg></button>
        <span class="lang">РУС</span>
        <time><span>22:00</span><span>04.07.2016</span></time>
      </div>
    </footer>
  </div>
</template>

<style>
body { background: #2b2b2b; }
</style>

<style scoped>
* { box-sizing: border-box; }
.app { min-height: 100vh; display: flex; flex-direction: column; font: 10px/12px "Liberation Sans", Arial, sans-serif; color: #b0b0b0; background: #2b2b2b; }
button, input, select { font: inherit; color: inherit; border: 0; padding: 0; margin: 0; background: none; border-radius: 0; }
h1, h2, ul { margin: 0; padding: 0; font-weight: 400; list-style: none; }
i, em { font-style: normal; }
svg { display: block; flex: none; }

.title { height: 24px; background: #fff; color: #000; display: flex; align-items: center; padding-left: 1px; }
.title h1 { font: 11px/18px "Open Sans", "Noto Sans", sans-serif; flex: 1; margin-left: 4px; }
.win { display: flex; padding-right: 2px; }
.win button { width: 46px; height: 22px; display: flex; align-items: center; justify-content: center; }
.menu { height: 19px; background: #fff; border-bottom: 1px solid #dde; display: flex; gap: 15px; padding: 0 7px; font: 11px/18px "Open Sans", "Noto Sans", sans-serif; color: #000; }
.menu a { color: #000; text-decoration: none; }
.menu span { margin-left: auto; }
.tabs { height: 16px; background: #464646; display: flex; align-items: flex-end; }
.plus { width: 10px; height: 16px; color: #ddd; font-weight: 700; }
.tab { width: 77px; height: 15px; background: #c9d2d2; clip-path: polygon(8px 0, 69px 0, 100% 100%, 0 100%); color: #333; font: 700 11px/15px "Liberation Sans", Arial, sans-serif; }
.monfx { margin: 0 2px 1px auto; width: 64px; height: 14px; background: #5cb574; border: 1px solid #111; color: #075517; font: 8px/12px "Liberation Sans", Arial, sans-serif; display: flex; justify-content: space-between; padding: 0 2px; white-space: nowrap; }

.body { flex: 1; display: flex; gap: 4px; }
.left { width: 83px; overflow: hidden; display: flex; flex-direction: column; background: #640a09; }
.center { flex: 1; min-width: 0; display: flex; flex-direction: column; }
.right { width: 127px; padding-right: 7px; display: flex; flex-direction: column; background: #333; }

.tb { width: 30px; height: 30px; background: linear-gradient(#4b4b4b, #2c2c2c); border: 1px solid #1c1c1c; border-bottom: 2px solid #0c0c0c; box-shadow: inset 0 1px #5c5c5c; color: #b4b4b4; font-size: 10px; line-height: 10px; display: flex; align-items: center; justify-content: center; text-align: center; flex: none; overflow: hidden; white-space: pre; }
.tb.wide { width: 60px; }
.tb.on { background: radial-gradient(#8fa09d, #65736f); color: #b6f7b6; box-shadow: inset 0 0 3px #a8b8b4; }
.tb.au { background: linear-gradient(#666, #383838); font: 700 17px/20px "Liberation Sans", Arial, sans-serif; color: #ccc; }
.bars { height: 47px; display: flex; gap: 7px; padding-bottom: 4px; }
.bar { border: 1px solid #3f4b4b; border-left: 7px solid #455050; background: #333; display: flex; gap: 15px; padding-top: 5px; min-width: 0; overflow: hidden; }
.grp { display: flex; }
.b1 { width: 530px; padding-left: 6px; }
.b2 { width: 790px; padding-left: 16px; }
.b3 { flex: 1; justify-content: center; }
.bars.bottom { height: 43px; padding: 0; margin-top: 4px; }
.b4 { width: 843px; padding-left: 118px; }
.b5 { flex: 1; padding-left: 38px; }

.transport { height: 42px; background: linear-gradient(#4a4a4a, #303030); border: 1px solid #3a3a3a; border-top-color: #5a5a5a; display: flex; align-items: center; padding: 0 12px 0 4px; }
.gauto { width: 59px; height: 32px; border: 1px solid #222; border-radius: 2px; background: #424242; font-size: 7px; font-weight: 700; text-align: center; color: #999; white-space: nowrap; }
.gauto > span { display: block; line-height: 14px; }
.gauto button { margin: 0 2px; width: 53px; height: 13px; border: 1px solid #2a2a2a; color: #777; display: flex; align-items: center; gap: 8px; font-size: 8px; }
.clock { width: 297px; height: 33px; margin: 0 8px; border: 1px solid #222; border-bottom-color: #666; border-radius: 2px; background: linear-gradient(#363636, #444); text-align: center; font: 700 21px/29px "Liberation Sans", Arial, sans-serif; color: #a8a8a8; }
.pill { display: flex; border: 1px solid #0e0e0e; border-radius: 15px; overflow: hidden; height: 30px; background: linear-gradient(#505050, #1d1d1d); }
.pill button { width: 29px; border-left: 1px solid #111; }
.pill button:first-child { border: 0; }
.round { width: 29px; height: 29px; margin-left: 5px; border-radius: 50%; border: 1px solid #0e0e0e; background: linear-gradient(#505050, #1d1d1d); display: flex; align-items: center; justify-content: center; }
.record { background: linear-gradient(#a05a5a, #4a2426); }
.record i { width: 12px; height: 12px; border: 3px solid #cbb; border-radius: 50%; }
.bpm, .sig { width: 43px; height: 32px; margin-left: 8px; border: 1px solid #1c1c1c; border-bottom-color: #666; border-radius: 2px; background: linear-gradient(#4a4a4a, #333); }
.bpm span { display: block; line-height: 14px; }
.sig { width: 31px; background: #353535; }
.sel { margin-left: auto; width: 218px; height: 16px; border: 1px solid #1a1a1a; border-radius: 2px; background: #333; display: flex; gap: 2px; line-height: 14px; padding: 0 1px; }
.sel span { width: 45px; white-space: nowrap; }
.sel b { flex: 1; font-weight: 400; text-align: center; background: #2c2c2c; border-radius: 2px; }

.mainrow { flex: 1; display: flex; margin-top: 1px; }
.tcp { width: 362px; border-right: 7px solid #292929; background: #333; padding-left: 3px; display: flex; flex-direction: column; }
.tcpbar { display: flex; padding: 34px 0 38px; }
.track, .env { display: flex; height: 84px; width: 352px; flex: none; overflow: hidden; }
.env { height: 63px; background: linear-gradient(#5d5d5d, #4b4b4b); border-top: 1px solid #888; }
.tbody { width: 265px; padding: 10px 6px 0 7px; display: flex; flex-direction: column; gap: 6px; border-top: 1px solid rgba(255, 255, 255, .3); flex: none; }
.trow { display: flex; height: 16px; align-items: center; }
.trow:first-child { height: 17px; }
.red .tbody { background: linear-gradient(#ff5a52, #ff443d); }
.red .num { background: #ff6058; }
.red .art { background: linear-gradient(#8a1010, #5c0505); }
.green .tbody { background: linear-gradient(#b6f2af, #8ecb8c); }
.green .num { background: linear-gradient(#cbffc0, #a5e39f); }
.green .art { background: linear-gradient(#4d6544, #34492e); }
.white .tbody { background: linear-gradient(#f2f4f4, #dfe3e3); }
.white .num { background: #fff; }
.grey .tbody { background: linear-gradient(#b1bdbd, #8d9c9c); }
.grey .num { background: #aab6b6; }
.art { flex: 1; border: 1px solid #000; background: linear-gradient(#4b4b4b, #2f2f2f); margin-left: 1px; }
.num { width: 18px; color: #333; text-align: center; line-height: 84px; font-size: 11px; border-left: 1px solid #555; position: relative; }
.num svg { position: absolute; right: 5px; bottom: 3px; }
.rec { width: 17px; height: 17px; flex: none; border-radius: 50%; border: 2px solid #231818; background: radial-gradient(circle, #5e3030 18%, #c99 24%, #c99 36%, #6b3838 44%); }
.rec.teal { border-color: #222; background: radial-gradient(circle, #333 15%, #2a9a70 20%, #2a9a70 38%, #555 46%); }
.name { width: 78px; height: 17px; background: #505050; color: #ccc; font-size: 12px; padding-left: 4px; border-top: 1px solid #2a2a2a; border-bottom: 1px solid #999; min-width: 0; }
.red .name { background: #a81a17; }
.green .name { background: #5a7f50; }
.msr { width: 36px; height: 17px; background: #4a4a4a; flex: none; font: 9px/7px "DejaVu Sans Mono", monospace; color: #7d7d7d; display: flex; flex-wrap: wrap; align-content: center; padding-left: 2px; text-align: left; overflow: hidden; }
.msr i.g { color: #6fbf7f; width: 33px; }
.msr i { width: 17px; }
.msr i.y { color: #c8c04a; }
.msr i.c { color: #4cc3c3; }
.io { width: 22px; height: 17px; background: linear-gradient(#333, #1a1a1a); color: #ddd; font-size: 11px; flex: none; }
.meter { width: 50px; height: 17px; margin: 0 6px; background: #4b4b4b; border: 2px solid #3a3a3a; border-bottom-color: #bbb; color: #aaa; text-align: right; line-height: 12px; padding-right: 6px; flex: none; }
.ms { width: 17px; height: 17px; background: linear-gradient(#e8e8e8, #cfcfcf); border: 1px solid #999; font-weight: 700; line-height: 15px; border-radius: 1px; font-size: 11px; flex: none; }
.ms.m { color: #641818; margin-right: 3px; }
.ms.s { color: #6f6a22; font-weight: 400; }
.fader { width: 152px; height: 16px; position: relative; background: #505050; border: 1px solid #222; border-bottom-color: #bbb; border-radius: 2px; flex: none; }
.fader input { appearance: none; display: block; width: 100%; height: 14px; background: linear-gradient(#222, #222) 17px 6px / 92px 2px no-repeat; }
.fader input::-webkit-slider-thumb { appearance: none; width: 25px; height: 15px; border-radius: 2px; border: 0; background: linear-gradient(#222, #222) 12px 3px / 1px 9px no-repeat, linear-gradient(90deg, #bbb, #fff 20%, #eee 40%, #ccc 50%, #eee 60%, #fff 80%, #bbb); box-shadow: 0 2px 2px rgba(0, 0, 0, .5); }
.fader span { position: absolute; right: 1px; top: 1px; color: #b5b5b5; font-size: 10px; }
.knob { width: 16px; height: 16px; border-radius: 50%; flex: none; margin-left: 6px; border: 1px solid #667; background: linear-gradient(#333, #333) 50% 1px / 1px 6px no-repeat, linear-gradient(#fafafa, #c8cccc); }
.knob.big { width: 23px; height: 23px; border: 2px solid #5c6868; background: linear-gradient(#333, #333) 50% 0 / 1px 9px no-repeat, linear-gradient(#fafafa, #c8cccc); }
.panbox { width: 33px; height: 15px; background: #7d8a8a; color: #e5eaea; text-align: right; padding-right: 2px; line-height: 14px; border-bottom: 1px solid #aab; margin-right: 6px; flex: none; }
.fx { width: 24px; height: 16px; background: #5cb878; border: 1px solid #2d6b40; border-right: 0; color: #084a16; font-weight: 700; line-height: 14px; flex: none; white-space: nowrap; }
.fx.pw { width: 13px; border: 1px solid #2d6b40; font-size: 8px; }
.trim { width: 42px; height: 15px; display: flex; align-items: center; background: #758383; color: #dfe5e5; font-size: 9px; font-weight: 700; border-bottom: 1px solid #c5cccc; margin-right: 6px; flex: none; }
.trim svg { background: #9fadad; }
.trim span { flex: 1; text-align: center; }
.phase { width: 15px; height: 15px; border-radius: 50%; background: #93a1a1; border: 1px solid #667272; color: #333; line-height: 12px; font-size: 10px; flex: none; }
.inp { width: 84px; height: 15px; margin-left: 6px; position: relative; flex: none; }
.inp select { appearance: none; width: 100%; height: 15px; background: #748282; color: #e2e7e7; padding: 0 14px 0 4px; font-size: 9px; border-bottom: 1px solid #c5cccc; border-radius: 0 8px 8px 0; display: block; text-overflow: clip; }
.inp i { position: absolute; right: 0; top: 0; width: 14px; height: 14px; border-radius: 50%; background: #95a2a2; color: #333; text-align: center; font-size: 7px; line-height: 14px; pointer-events: none; }
.mon { width: 37px; height: 15px; margin-left: auto; display: flex; background: #748282; color: #dfe5e5; font-size: 7px; line-height: 14px; font-weight: 700; flex: none; border-bottom: 1px solid #c5cccc; }
.mon b { width: 13px; background: #a3b0b0; color: #566; flex: none; }
.mon span { padding-left: 1px; }
.mon i, .stack em i { color: #a3afaf; font-weight: 400; }
.mon.live b { background: #5cb878; color: #084a16; }
.mon.live span { color: #9aa6a6; }
.env .tbody { width: 334px; border: 0; padding-top: 11px; gap: 7px; }
.env .name { width: 191px; padding-left: 6px; border-right: 1px solid #777; }
.epw { margin-left: 6px; }
.env .fx.epw { width: 19px; height: 17px; font-size: 9px; }
.shape { width: 25px; height: 17px; background: #98a5a5; }
output { margin-left: auto; font-size: 11px; color: #333; }
.two { padding-left: 19px; }
.env .fader { width: 190px; height: 17px; }
.env .fader input { background: linear-gradient(#888, #888) 17px 7px / 156px 1px no-repeat; height: 15px; }
.mini { height: 17px; background: #2d2d2d; border: 1px solid #1a1a1a; border-bottom-color: #777; color: #8da0a0; font-size: 7px; line-height: 7px; display: flex; align-items: center; text-align: left; gap: 1px; flex: none; }
.pm { width: 58px; margin: 0 5px 0 6px; }
.ml { width: 43px; }
.estrip { flex: 1; background: #b9c4c4; padding: 4px 0 0 3px; }
.status { margin: auto 8px 4px 2px; border-top: 1px solid #777; padding-top: 2px; height: 16px; color: #b8b8b8; line-height: 14px; }

.arr { flex: 1; min-width: 0; display: flex; flex-direction: column; background: #333; padding: 20px 3px 2px 0; margin-left: 1px; }
.regions { height: 17px; background: #494949; margin-bottom: 17px; flex: none; }
.ruler { width: 100%; background: #494949; }
.r1 { font: 14px "Liberation Sans", Arial, sans-serif; fill: #b8b8b8; }
.r2 { font: 13px "Liberation Sans", Arial, sans-serif; fill: #b8b8b8; }
.canvasrow { flex: 1; display: flex; min-height: 720px; }
.canvas { flex: 1; min-width: 0; height: auto; align-self: stretch; overflow: hidden; }
.tag { font: 10px "Liberation Sans", Arial, sans-serif; fill: #8d8f8e; }
.canvas .inf { font: 700 11px "Liberation Serif", serif; fill: #fff; }
.fn { font: 10px "Liberation Sans", Arial, sans-serif; fill: #222; }
.vs { width: 16px; background: #474747; display: flex; flex-direction: column; align-items: center; padding: 3px 0 1px; gap: 3px; }
.rb { width: 12px; height: 12px; border-radius: 50%; background: #b8b8b8; border: 1px solid #777; color: #111; font: 700 6px/10px "DejaVu Sans", sans-serif; text-align: center; flex: none; }
.vthumb { flex: 1; width: 12px; border: 1px solid #111; border-radius: 6px; background: linear-gradient(90deg, #333, #555 40%, #2a2a2a); }
.vs hr { width: 8px; margin: 2px 0; border: 0; border-top: 2px solid #666; }
.hs { height: 18px; display: flex; align-items: center; gap: 4px; padding: 0 18px 0 3px; background: #333; }
.htrack { flex: 1; height: 14px; background: #565656; display: flex; }
.hthumb { margin-left: 41%; width: 43%; border: 1px solid #111; border-radius: 6px; background: linear-gradient(#333, #4a4a4a 40%, #222); display: flex; justify-content: space-between; align-items: center; padding: 0 2px; }
.hthumb i { width: 5px; height: 7px; border-radius: 3px; background: #ccc; }
.hthumb i:nth-child(2) { width: 1px; background: #888; }
.hs hr { width: 2px; height: 8px; border: 0; margin: 0; background: #666; }

.fxbar { height: 39px; margin-bottom: 6px; background: #333; border: 1px solid #3f4b4b; border-left: 6px solid #3c4646; display: flex; justify-content: center; padding: 3px 0; flex: none; }
.fxlist { flex: none; overflow: hidden; }
.fxlist.red { height: 457px; border-left: 2px solid #a01010; background: linear-gradient(rgba(0, 0, 0, 0), rgba(0, 0, 0, .18)), repeating-linear-gradient(#7d0f0e 0 12px, #8c1614 12px 14px); }
.fxitem { display: block; width: 100%; height: 14px; text-align: left; padding-left: 2px; border: 1px solid #222; border-radius: 2px; white-space: nowrap; overflow: hidden; line-height: 12px; }
.red .fxitem { background: #9c1210; color: #c87670; border-color: #5a0a0a; }
.fxlist.grey { height: 250px; margin: 1px 0 0 2px; background: repeating-linear-gradient(#3c3c3c 0 13px, #333 13px 14px); }
.fxlist.grey .fxitem { color: #a35b5b; background: #424242; }
.lrow { height: 37px; background: #640a09; display: flex; padding: 3px 0 0 6px; gap: 5px; flex: none; }
.fxpow { width: 21px; height: 29px; background: linear-gradient(#7ccf92, #4ba564); border: 1px solid #2b6b3d; color: #07561a; font-weight: 700; flex: none; display: flex; flex-direction: column; align-items: center; justify-content: center; }
.fxpow b { font-size: 9px; line-height: 12px; }
.fxpow span { line-height: 13px; border-top: 1px solid #3c8a50; white-space: nowrap; font-size: 10px; }
.lio { width: 51px; flex: none; }
.route { width: 51px; height: 18px; background: #2c2c2c; border-top: 1px solid #111; display: flex; align-items: center; color: #ccc; font-size: 10px; }
.lio .msr { background: none; }
.infx { width: 51px; height: 11px; background: #8a9797; color: #3b4343; font: 700 8px/11px "DejaVu Sans Mono", monospace; display: block; }
.linput { height: 17px; margin: 1px 0 1px 5px; background: #303030; border: 1px solid #111; text-align: left; padding-left: 3px; color: #bbb; display: flex; justify-content: space-between; width: 78px; line-height: 14px; flex: none; }
.linput i { width: 14px; border-radius: 7px; text-align: center; background: #555; font-size: 7px; }
.lname { height: 19px; background: #c60404; border-bottom: 1px solid #600; text-align: center; line-height: 18px; font-size: 11px; color: #e0b8b4; padding-left: 6px; flex: none; }
.strip { flex: 1; background: #ff4f48; display: flex; flex-direction: column; align-items: center; padding: 8px 0 6px; }
.strip .knob { margin: 0 0 0 8px; }
.cen { color: #7c3a38; line-height: 14px; margin: 3px 0 2px 8px; }
.strip-in { flex: 1; width: 100%; display: flex; padding-left: 8px; gap: 5px; }
.lbox { width: 48px; background: linear-gradient(#505050, #2a2a2a); border: 1px solid #222; border-bottom-color: #c7cccc; border-right-color: #aaa; border-radius: 2px; position: relative; display: flex; flex-direction: column; flex: none; }
.gain { text-align: center; line-height: 16px; color: #b2b2b2; flex: none; }
.lmeter { flex: 1; display: flex; }
.vf { writing-mode: vertical-lr; direction: rtl; appearance: none; width: 14px; background: linear-gradient(#181818, #181818) center / 3px calc(100% - 30px) no-repeat; flex: none; margin-left: 6px; min-height: 200px; }
.vf::-webkit-slider-thumb { appearance: none; width: 14px; height: 31px; border-radius: 2px; background: linear-gradient(#222, #222) 2px 15px / 10px 1px no-repeat, linear-gradient(#bbb, #fff 15%, #eee 35%, #ccc 50%, #eee 65%, #fff 85%, #aaa); box-shadow: 0 2px 3px rgba(0, 0, 0, .6); }
.lmeter ul { margin-left: 6px; width: 20px; background: repeating-linear-gradient(90deg, #333 0 4px, #2a2a2a 4px 6px); text-align: center; color: #b8b8b8; font-weight: 700; white-space: nowrap; padding-top: 7px; }
.lmeter li { padding-top: 13px; line-height: 12px; }
.lmeter li.inf, .lmeter li.first { padding-top: 0; }
.lmeter li.inf { line-height: 14px; font-weight: 400; }
.lmeter li.hot { color: #eee; }
.lmeter li.dim { color: #888; }
.lrec { position: absolute; right: -17px; bottom: 2px; width: 20px; height: 20px; }
.lbtns { width: 22px; display: flex; flex-direction: column; flex: none; }
.lbtns .ms { width: 22px; height: 18px; margin: 0 0 4px; }
.stack { width: 22px; height: 29px; margin-top: 4px; display: flex; flex-direction: column; background: #748282; color: #dfe5e5; font-size: 7px; flex: none; }
.stack span { height: 15px; width: 100%; background: #9fadad; color: #445; line-height: 14px; display: flex; align-items: center; justify-content: center; }
.stack em { line-height: 14px; width: 100%; }
.stack + .stack { margin-top: 6px; }
.lbtns .phase { margin: 7px 0 0 4px; }
.lnum { height: 18px; background: #ff5f58; border-top: 1px solid #a22; border-bottom: 2px solid #111; text-align: center; padding-left: 8px; color: #7a2a28; line-height: 16px; font-size: 11px; flex: none; }
.lscroll { height: 18px; background: #4a4a4a; display: flex; align-items: center; padding: 0 2px; gap: 5px; flex: none; }
.lscroll i { width: 8px; height: 10px; border: 1px solid #111; background: repeating-linear-gradient(90deg, #888 0 2px, #222 2px 4px); margin-right: auto; }
.lfoot { height: 7px; background: #3a4646; border-top: 1px solid #556; flex: none; }

.outs { height: 15px; margin-left: 2px; flex: none; }
.outs button { width: 115px; height: 14px; border: 1px solid #111; border-radius: 2px 7px 7px 2px; background: linear-gradient(#555, #444); display: flex; justify-content: space-between; align-items: center; padding-right: 1px; }
.outs span { background: #171717; color: #ccc; line-height: 12px; padding: 0 1px; white-space: nowrap; }
.outs i, .sends i { width: 8px; height: 10px; border-radius: 5px; background: #b0bcbc; }
.sends { height: 236px; margin-left: 2px; display: flex; flex-direction: column; align-items: flex-end; gap: 4px; padding: 3px 3px 0 0; background: repeating-linear-gradient(#383838 0 13px, #333 13px 14px); flex: none; border-bottom: 2px solid #2a2a2a; }
.sends i { background: #404646; flex: none; }
.rrow { height: 35px; display: flex; gap: 5px; padding-left: 5px; flex: none; }
.rrow h2 { font-size: 12px; line-height: 16px; color: #b8b0a8; }
.mio { width: 39px; height: 14px; background: #1f1f1f; border: 1px solid #0e0e0e; color: #ddd; line-height: 12px; display: block; }
.master { flex: 1; background: linear-gradient(#b1bdbd, #889898); border-top: 2px solid #111; border-left: 1px solid #dde; display: flex; flex-direction: column; padding-bottom: 7px; margin-left: 1px; }
.mtop { display: flex; align-items: center; height: 36px; padding-left: 6px; }
.mono { width: 42px; height: 16px; background: #9eabab; border: 1px solid #77848a; color: #333; margin-right: 6px; flex: none; }
.mtop .knob { margin: 0; }
.mtop .panbox { width: 36px; height: 16px; margin: 0; padding-right: 3px; }
.mrow { flex: 1; display: flex; padding-left: 7px; }
.mbox { width: 81px; background: linear-gradient(#505050, #262626); border: 2px solid #222; border-bottom-color: #aab; border-radius: 2px; display: flex; flex-direction: column; flex: none; }
.mmeter { flex: 1; display: flex; }
.mmeter .vf { margin-left: 0; }
.mscale { flex: 1; display: flex; flex-direction: column; margin-left: 4px; color: #8c8c8c; font-weight: 700; background: repeating-linear-gradient(90deg, #333 0 8px, #3e3e3e 8px 14px); }
.infs { display: flex; justify-content: space-between; padding: 0 5px 0 8px; line-height: 14px; color: #e6e6e6; }
.mscale .infs:first-child { padding-top: 10px; }
.mscale .yel { color: #d2d26c; }
.cols { flex: 1; display: flex; white-space: nowrap; }
.cols div { display: flex; flex-direction: column; justify-content: space-between; }
.side { width: 16px; padding: 15px 0; }
.side.r { text-align: right; align-items: flex-end; }
.mid { flex: 1; align-items: center; padding: 2px 0 26px; color: #a5a5a5; }
.mbtns { flex: 1; display: flex; flex-direction: column; align-items: flex-start; padding-left: 7px; }
.mbtns .ms { margin: 0 0 4px; }
.mbtns .stack { width: 17px; height: 26px; margin-top: 0; font-size: 9px; }
.mixer { margin: auto 0 12px; align-self: flex-end; }

.task { height: 40px; background: linear-gradient(90deg, #171310, #171310 20%, #2a2a2a 26%, #242220 50%, #0a0707 60%, #1d1512 75%, #191412 82%, #242321 90%, #1c1b19); display: flex; color: #fff; flex: none; }
.app-btn { width: 49px; height: 40px; display: flex; align-items: center; justify-content: center; border-bottom: 3px solid transparent; padding: 2px 2px 0 0; }
.app-btn.active { background: #4a4a4a; border-color: #76b9ed; }
.app-btn.open { border-image: linear-gradient(90deg, transparent 4px, #76b9ed 4px 45px, transparent 45px) 3; border-style: solid; border-width: 0 0 3px; }
.tray { margin-left: auto; display: flex; align-items: center; font: 11px/17px "Open Sans", "Noto Sans", sans-serif; gap: 4px; padding-right: 14px; }
.lang { margin: 0 13px 0 6px; }
time { display: flex; flex-direction: column; align-items: center; }
</style>
